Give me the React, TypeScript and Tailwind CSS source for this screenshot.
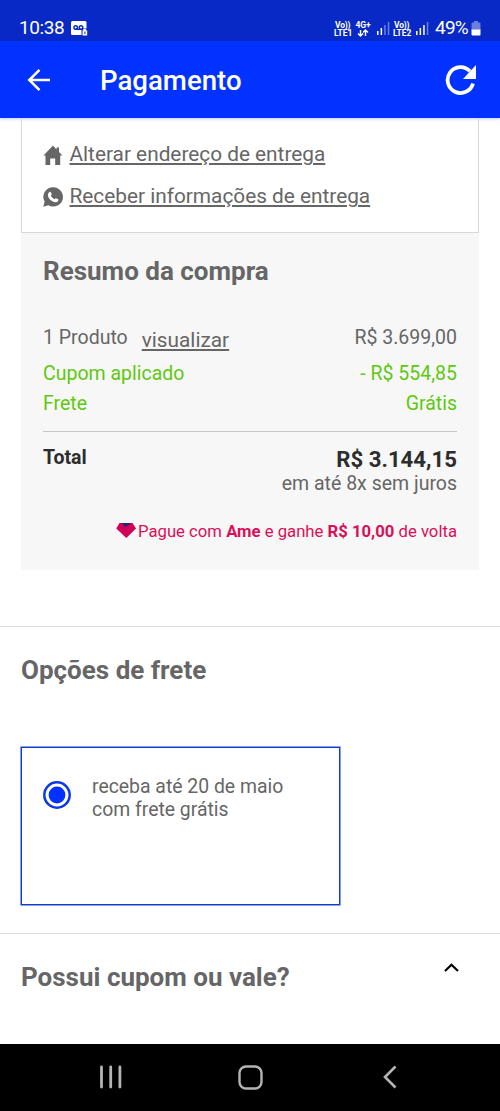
import type { ReactNode } from "react";

function SignalBars({ active }: { active: number }) {
  const heights = [4, 7, 10, 13];
  return (
    <svg width="13" height="14" viewBox="0 0 13 14" fill="#fff">
      {heights.map((h, i) => (
        <rect key={h} x={i * 3.6} y={14 - h} width="1.5" height={h} opacity={i < active ? 1 : 0.4} />
      ))}
    </svg>
  );
}

function Volte({ label }: { label: string }) {
  return (
    <div className="flex flex-col text-[8.5px] leading-[8px] font-bold whitespace-nowrap">
      <span className="pl-px tracking-[-0.2px]">Vo))</span>
      <span className="tracking-[-0.1px]">{label}</span>
    </div>
  );
}

function StatusBar() {
  return (
    <div className="flex h-[41px] items-start bg-[#0829c5] pt-[18px] pl-[19px] text-white">
      <span className="w-[46px] text-[19px] leading-5 tracking-[-0.4px]">10:38</span>
      <svg className="mt-[3px] ml-[6px]" width="18" height="15" viewBox="0 0 18 15">
        <rect width="15.5" height="14" rx="1.5" fill="#fff" />
        <g fill="none" stroke="#0829c5" strokeWidth="1.4">
          <circle cx="4.7" cy="6.5" r="1.8" />
          <circle cx="10" cy="6.5" r="1.8" />
          <path d="M4.7 8.3H10" />
        </g>
        <rect x="10.5" y="7.5" width="7.5" height="7.5" fill="#0829c5" />
        <path d="M11.5 9.5h.7V8.5q1.500-1.500 3 0v1h1v5h-4.700z" fill="#fff" />
        <path d="M13.9 10.5v2.5" stroke="#0829c5" />
      </svg>
      <div className="mt-[3px] ml-[245px] flex w-[18px]">
        <Volte label="LTE1" />
      </div>
      <div className="mt-[3px] ml-[3px] flex w-4 flex-col items-center text-[8.5px] leading-[8px] font-bold">
        <span className="tracking-[-0.1px]">4G+</span>
        <svg width="12" height="8" viewBox="0 0 12 8" fill="none" stroke="#fff" strokeWidth="1.4">
          <path d="M3.5 1v6M1 4.5l2.5 2.5L6 4.5M8.5 7V1M6 3.5L8.5 1 11 3.5" />
        </svg>
      </div>
      <div className="mt-[3px] ml-[6px]">
        <SignalBars active={2} />
      </div>
      <div className="mt-[3px] ml-[3px] flex w-[19px]">
        <Volte label="LTE2" />
      </div>
      <div className="mt-[3px] ml-[4px]">
        <SignalBars active={3} />
      </div>
      <span className="ml-[6px] w-[35px] text-[19px] leading-5 tracking-[-0.8px]">49%</span>
      <svg className="mt-[3px] ml-px" width="10" height="15" viewBox="0 0 10 15" fill="#fff">
        <path d="M3 0h4v1.5h1.5q1 0 1 1V9H.5V2.5q0-1 1-1H3z" opacity=".4" />
        <path d="M.5 8.5h9v5q0 1-1 1h-7q-1 0-1-1z" />
      </svg>
    </div>
  );
}

function Header() {
  return (
    <header className="flex h-[77px] items-center bg-[#0132ff] text-white shadow-[0_1px_3px_#0132ff40]">
      <svg className="ml-[27px]" width="24" height="24" viewBox="0 0 24 24" fill="none" stroke="#fff" strokeWidth="2.6">
        <path d="M23 12H3M12.5 1.8L2.3 12l10.2 10.2" />
      </svg>
      <h1 className="ml-[49px] flex-1 pt-[2px] text-[27.6px] leading-8 font-medium whitespace-nowrap">Pagamento</h1>
      <svg className="mt-px mr-[23px]" width="32" height="32" viewBox="0 0 32 32">
        <path d="M28 19.5A12.9 12.9 0 1 1 25 7.3" fill="none" stroke="#fff" strokeWidth="3.8" />
        <path d="M31 1v14H18z" fill="#fff" />
      </svg>
    </header>
  );
}

function AddressLink({ icon, children }: { icon: ReactNode; children: ReactNode }) {
  return (
    <a className="flex h-[42px] items-center gap-[6.5px] text-[20.8px] whitespace-nowrap">
      <span className="flex w-5 justify-center">{icon}</span>
      <span className="underline decoration-[1.5px] underline-offset-[2px]">{children}</span>
    </a>
  );
}

const homeIcon = (
  <svg width="20" height="20" viewBox="0 0 20 20" fill="#666">
    <path d="M10 .5L.5 10.5h2V20h4.7v-6.5h5V20h5v-9.5h2.3L16 7V2.500h-2.500v2z" />
  </svg>
);

const whatsappIcon = (
  <svg width="20" height="20" viewBox="0 0 20 20">
    <path d="M10.2.2A9.7 9.7 0 1 1 5.4 18.3L.2 19.8l1.5-5A9.7 9.7 0 0 1 10.2.2z" fill="#666" />
    <path
      d="M6.2 5.2c.5-.6 1.3-.6 1.6 0l.9 1.9c.2.5-.3 1.1-.8 1.7.9 1.7 2 2.7 3.7 3.5.7-.9 1.1-1.3 1.5-1.1l2 1c.5.3.3 1.1 0 1.7-.7 1.3-2.4 1.6-3.8 1.1-3-.9-5-2.9-6.2-5.6-.6-1.5.2-3.3 1.1-4.2z"
      fill="#fff"
    />
  </svg>
);

function Summary() {
  return (
    <section className="mx-[21px] h-[337px] bg-[#f7f7f7] px-[22px] pt-[18px] text-[19.5px]">
      <h2 className="text-[26px] leading-10 font-bold">Resumo da compra</h2>
      <div className="mt-7 flex h-[37px] items-center justify-between">
        <div className="flex pt-[2px]">
          <span>1 Produto</span>
          <a className="mt-[3px] ml-[14px] text-[20.8px] leading-7 underline decoration-[1.5px] underline-offset-[2px]">visualizar</a>
        </div>
        <span>R$ 3.699,00</span>
      </div>
      <div className="mt-[2px] flex justify-between leading-[31px] text-[#5fc810]">
        <span>Cupom aplicado</span>
        <span>- R$ 554,85</span>
      </div>
      <div className="flex justify-between leading-[30px] text-[#5fc810]">
        <span>Frete</span>
        <span>Grátis</span>
      </div>
      <div className="mt-3 flex justify-between border-t border-[#c8c8c8] pt-[15px]">
        <span className="mt-px leading-5 font-bold text-[#2d2d2d]">Total</span>
        <div className="text-right leading-6">
          <p className="text-[22.2px] leading-6 font-bold text-[#2d2d2d]">R$ 3.144,15</p>
          <p className="mt-px">em até 8x sem juros</p>
        </div>
      </div>
      <p className="mt-6 flex items-center justify-end text-[16.7px] leading-6 whitespace-pre text-[#db0f58]">
        <svg className="mr-[2px] mb-1" width="20" height="15" viewBox="0 0 20 15">
          <path d="M3.5 0h13L20 5.5 10.3 15 .3 5.5z" fill="#cf0056" />
          <path d="M5 0h10l-5 4z" fill="#26247b" />
        </svg>
        <span>Pague com <b>Ame</b> e ganhe <b>R$ 10,00</b> de volta</span>
      </p>
    </section>
  );
}

function ShippingOptions() {
  return (
    <section className="mt-[56px] h-[307px] border-t border-[#dedede] px-[21px] pt-[23px]">
      <h2 className="text-[26px] leading-10 font-bold">Opções de frete</h2>
      <div className="mt-[57px] flex h-[158px] w-[319px] border border-[#0f3fc8] pt-[28px] pl-[21px] shadow-[0_0_0_0.5px_#0f3fc8]">
        <svg className="mt-[5px]" width="28" height="28" viewBox="0 0 28 28">
          <circle cx="14" cy="14" r="12.7" fill="none" stroke="#0a38e6" strokeWidth="2.5" />
          <circle cx="14" cy="14" r="8.4" fill="#0132ff" />
        </svg>
        <p className="ml-[21px] text-[19.4px] leading-[22.5px] whitespace-nowrap">
          receba até 20 de maio
          <br />
          com frete grátis
        </p>
      </div>
    </section>
  );
}

function Coupon() {
  return (
    <section className="flex h-[111px] justify-between border-t border-[#dedede] pt-[23px] pr-[41px] pl-[21px]">
      <h2 className="text-[26px] leading-10 font-bold">Possui cupom ou vale?</h2>
      <svg className="mt-[6px]" width="15" height="9" viewBox="0 0 15 9" fill="none" stroke="#000" strokeWidth="2.2">
        <path d="M1 8l6.5-6.2L14 8" />
      </svg>
    </section>
  );
}

function NavBar() {
  return (
    <nav className="flex h-[67px] items-center bg-black pb-px pl-[99px]">
      <svg width="24" height="24" viewBox="0 0 24 24" stroke="#b4b4b4" strokeWidth="2.8" strokeLinecap="round">
        <path d="M2.5 2v20M11.7 2v20M20.9 2v20" />
      </svg>
      <svg className="ml-[115px]" width="25" height="25" viewBox="0 0 25 25" fill="none" stroke="#b4b4b4" strokeWidth="2.4">
        <rect x="1.5" y="1.5" width="22" height="22" rx="6.5" />
      </svg>
      <svg className="ml-[119px]" width="16" height="24" viewBox="0 0 16 24" fill="none" stroke="#b4b4b4" strokeWidth="2.6">
        <path d="M13.5 1.5L3 12l10.5 10.5" />
      </svg>
    </nav>
  );
}

export default function App() {
  return (
    <div className="h-[1111px] w-[500px] overflow-hidden bg-white font-[Roboto,sans-serif] text-[#666]">
      <StatusBar />
      <Header />
      <main>
        <section className="mx-[21px] h-[115px] border-x border-b border-[#d8d8d8] px-[21px] pt-4">
          <AddressLink icon={homeIcon}>Alterar endereço de entrega</AddressLink>
          <AddressLink icon={whatsappIcon}>Receber informações de entrega</AddressLink>
        </section>
        <Summary />
        <ShippingOptions />
        <Coupon />
      </main>
      <NavBar />
    </div>
  );
}
